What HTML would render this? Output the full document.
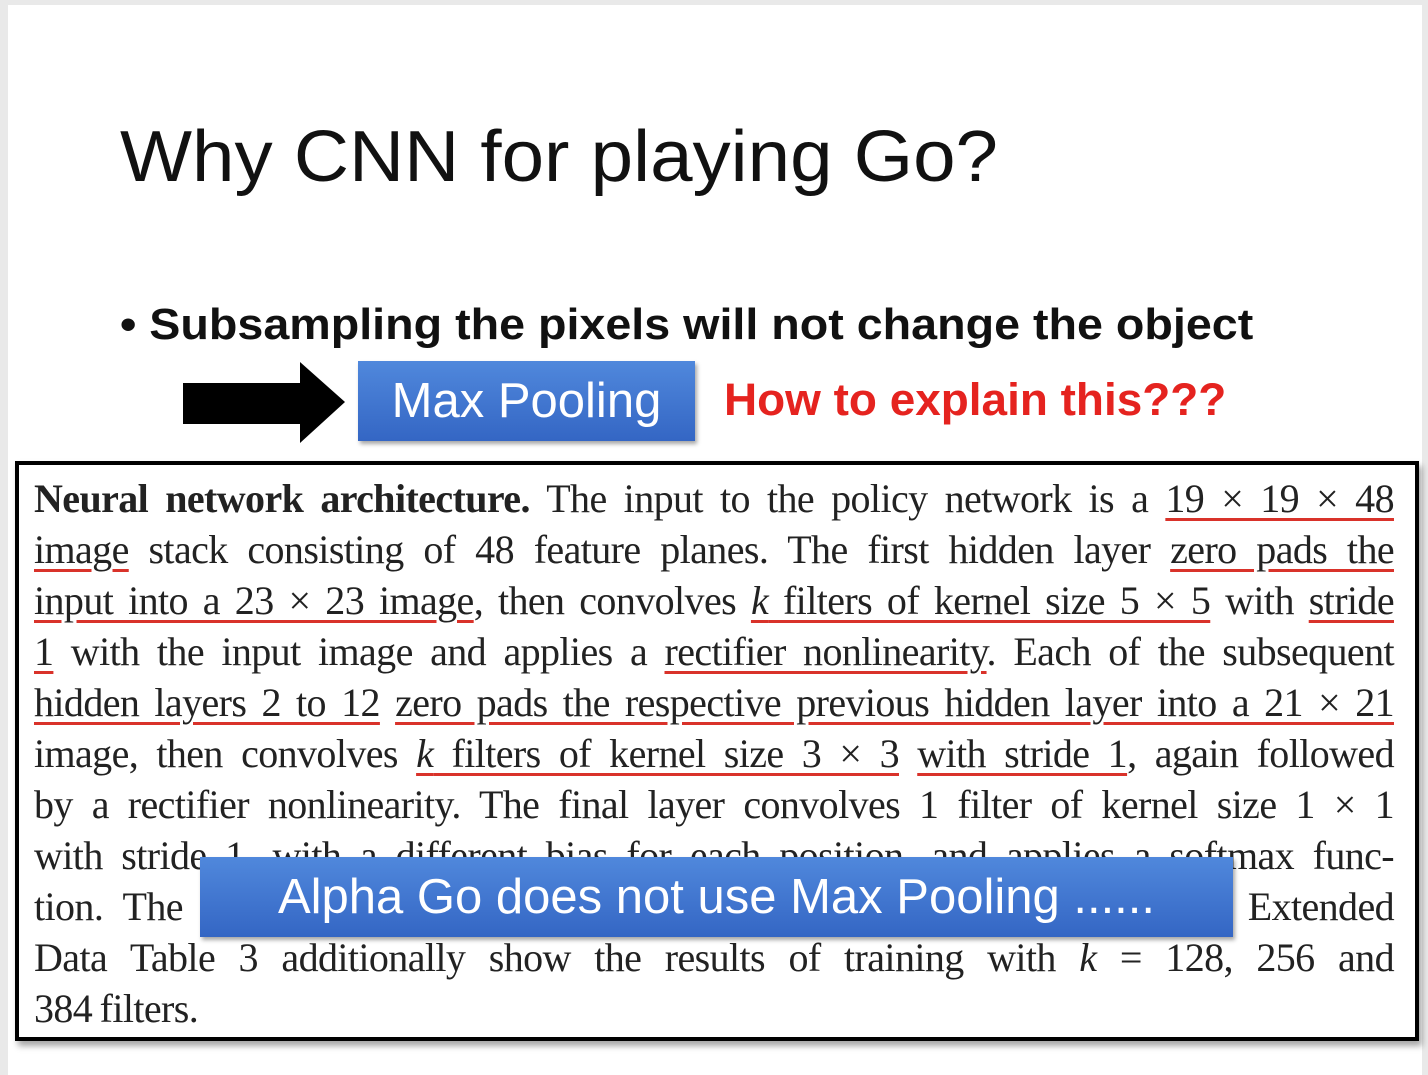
<!DOCTYPE html>
<html><head><meta charset="utf-8"><style>
body{margin:0;width:1428px;height:1069px;background:#e9e9e9;position:relative;overflow:hidden;font-family:"Liberation Sans",sans-serif}
.slide{position:absolute;left:8px;top:5px;width:1414px;height:1070px;background:#fff}
.title{position:absolute;left:120px;top:116px;font-size:72px;color:#111;white-space:nowrap;transform-origin:left top;transform:scaleX(1.06)}
.bullet{position:absolute;left:120px;top:300px;font-size:44px;font-weight:bold;color:#111;white-space:nowrap;transform-origin:left top;transform:scaleX(1.06)}
.btn{position:absolute;background:linear-gradient(#5088dc,#3466c4);color:#fff;box-shadow:2px 3px 4px rgba(0,0,0,.35);text-align:center;white-space:nowrap}
.red{position:absolute;left:724px;top:374px;font-size:45px;font-weight:bold;color:#e5231f;white-space:nowrap;transform-origin:left top;transform:scaleX(1.02)}
.box{position:absolute;left:15px;top:461px;width:1396px;height:572px;border:4px solid #000;background:#fff;box-shadow:3px 5px 6px rgba(0,0,0,.35)}
.ln{position:absolute;left:34px;width:1360px;font-family:"Liberation Serif",serif;font-size:40px;letter-spacing:-0.6px;word-spacing:-2px;color:#222;white-space:nowrap;text-align:justify;text-align-last:justify;height:48px;line-height:48px}
u{text-decoration:underline;text-decoration-color:#d9322a;text-decoration-thickness:3px;text-underline-offset:6px}
</style></head><body>
<div class="slide"></div>
<div class="title">Why CNN for playing Go?</div>
<div class="bullet">• Subsampling the pixels will not change the object</div>
<svg style="position:absolute;left:183px;top:362px" width="164" height="82"><polygon points="0,21 117,21 117,0 162,40 117,81 117,62 0,62" fill="#000"/></svg>
<div class="btn" style="left:358px;top:361px;width:337px;height:80px;line-height:80px;font-size:49px">Max Pooling</div>
<div class="red">How to explain this???</div>
<div class="box"></div>
<div class="ln" style="top:475px"><b>Neural network architecture.</b> The input to the policy network is a <u>19 × 19 × 48</u></div>
<div class="ln" style="top:526px"><u>image</u> stack consisting of 48 feature planes. The first hidden layer <u>zero pads the</u></div>
<div class="ln" style="top:577px"><u>input into a 23 × 23 image</u>, then convolves <u><i>k</i> filters of kernel size 5 × 5</u> with <u>stride</u></div>
<div class="ln" style="top:628px"><u>1</u> with the input image and applies a <u>rectifier nonlinearity</u>. Each of the subsequent</div>
<div class="ln" style="top:679px"><u>hidden layers 2 to 12</u> <u>zero pads the respective previous hidden layer into a 21 × 21</u></div>
<div class="ln" style="top:730px">image, then convolves <u><i>k</i> filters of kernel size 3 × 3</u> <u>with stride 1</u>, again followed</div>
<div class="ln" style="top:781px">by a rectifier nonlinearity. The final layer convolves 1 filter of kernel size 1 × 1</div>
<div class="ln" style="top:832px">with stride 1, with a different bias for each position, and applies a softmax func-</div>
<div class="ln" style="top:883px">tion. The match version of AlphaGo used <i>k</i> = 192 filters; Fig. 2b and Extended</div>
<div class="ln" style="top:934px">Data Table 3 additionally show the results of training with <i>k</i> = 128, 256 and</div>
<div class="ln" style="top:985px;text-align-last:left">384 filters.</div>
<div class="btn" style="left:200px;top:857px;width:1033px;height:80px;line-height:80px;font-size:49px">Alpha Go does not use Max Pooling ......</div>
</body></html>
